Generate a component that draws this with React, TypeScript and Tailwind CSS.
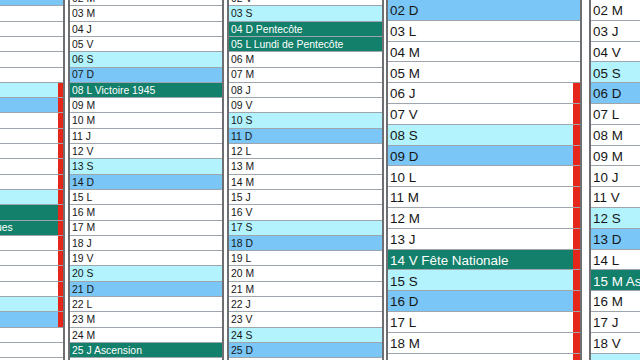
const JOURS = ['D', 'L', 'M', 'M', 'J', 'V', 'S'];

type Mois = {
  index: number;
  fetes: Record<number, string>;
  vacances: [number, number] | null;
};

const avril: Mois = { index: 3, fetes: { 16: 'Pâques', 17: 'Lundi de Pâques' }, vacances: [8, 23] };
const mai: Mois = { index: 4, fetes: { 1: 'Fête du Travail', 8: 'Victoire 1945', 25: 'Ascension' }, vacances: null };
const juin: Mois = { index: 5, fetes: { 4: 'Pentecôte', 5: 'Lundi de Pentecôte' }, vacances: null };
const juillet: Mois = { index: 6, fetes: { 14: 'Fête Nationale' }, vacances: [6, 31] };
const aout: Mois = { index: 7, fetes: { 15: 'Assomption' }, vacances: null };

type Taille = {
  row: string;
  text: string;
  strip: string;
  offset: string;
};

// cols avril -> juin are drawn smaller than juillet / aout in the picture
const petit: Taille = {
  row: 'h-[15.3px]',
  text: 'text-[10.4px] pt-[2px]',
  strip: 'w-[5px]',
  offset: 'mt-[-24.25px]',
};

const grand: Taille = {
  row: 'h-[20.8px]',
  text: 'text-[13.4px] pt-[2px]',
  strip: 'w-[7px]',
  offset: 'mt-[-20.8px]',
};

function Colonne({ mois, taille, className }: { mois: Mois; taille: Taille; className: string }) {
  const nbJours = new Date(2017, mois.index + 1, 0).getDate();
  const jours = Array.from({ length: nbJours }, (_, i) => i + 1);

  return (
    <div className={`flex shrink-0 flex-col self-start border-x-2 border-[#6d6f73] bg-white ${taille.offset} ${className}`}>
      {jours.map((d) => {
        const wd = new Date(2017, mois.index, d).getDay();
        const fete = mois.fetes[d];
        const vac = mois.vacances && d >= mois.vacances[0] && d <= mois.vacances[1];
        let bg = 'bg-white text-[#161616]';
        if (fete) bg = 'bg-[#12806a] text-white';
        else if (wd === 0) bg = 'bg-[#7ac6f6] text-[#161616]';
        else if (wd === 6) bg = 'bg-[#b2f3fd] text-[#161616]';
        return (
          <div key={d} className={`flex shrink-0 border-b border-[#9ea5ac] ${taille.row} ${bg}`}>
            <div className={`flex min-w-0 flex-1 items-center overflow-hidden whitespace-nowrap pl-[2px] leading-none ${taille.text}`}>
              {String(d).padStart(2, '0')} {JOURS[wd]}
              {fete ? ` ${fete}` : ''}
            </div>
            <div className={`shrink-0 ${taille.strip} ${vac ? 'bg-[#e5261b]' : ''}`} />
          </div>
        );
      })}
    </div>
  );
}

export default function App() {
  return (
    <div className="flex h-[360px] w-[640px] overflow-hidden bg-white font-['Liberation_Sans',Arial,sans-serif]">
      <Colonne mois={avril} taille={petit} className="ml-[-92px] w-[157px]" />
      <Colonne mois={mai} taille={petit} className="ml-[3px] w-[156px]" />
      <Colonne mois={juin} taille={petit} className="ml-[3px] w-[157px]" />
      <Colonne mois={juillet} taille={grand} className="ml-[2px] w-[196px]" />
      <Colonne mois={aout} taille={grand} className="ml-[7px] w-[196px]" />
    </div>
  );
}
